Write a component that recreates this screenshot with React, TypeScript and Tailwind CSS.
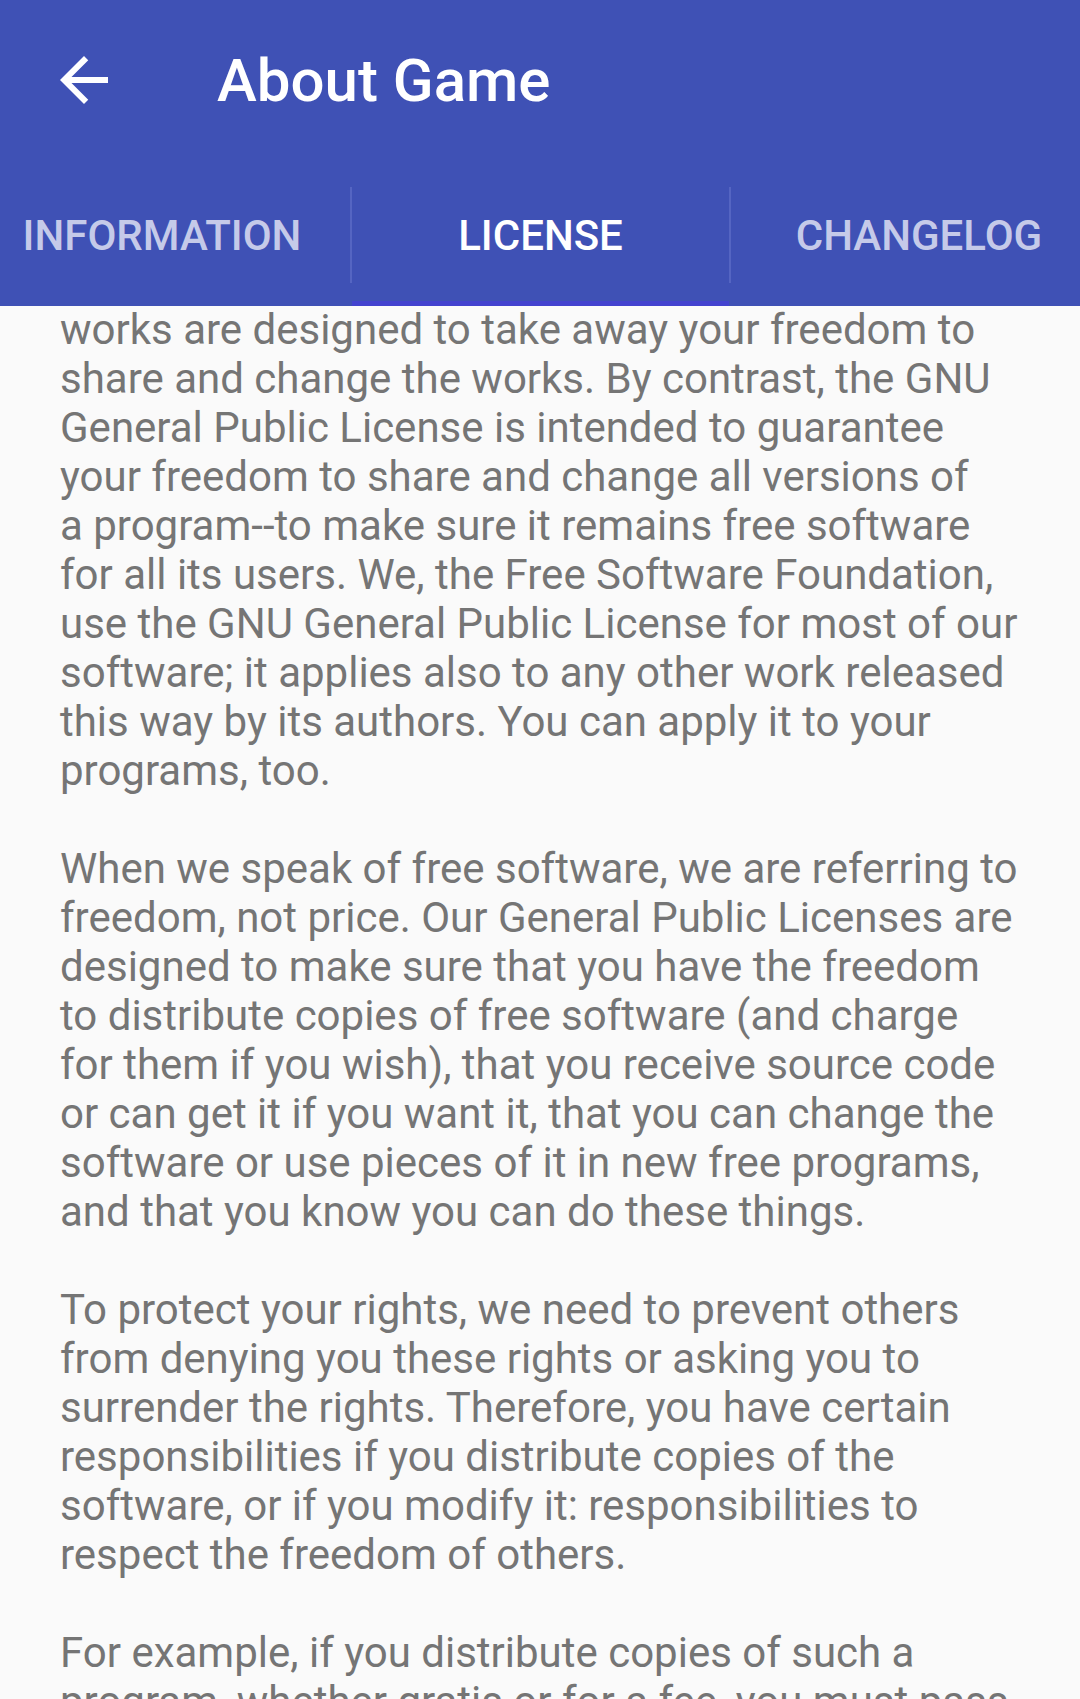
import React from "react";

const paragraphs: string[][] = [
  [
    "works are designed to take away your freedom to",
    "share and change the works. By contrast, the GNU",
    "General Public License is intended to guarantee",
    "your freedom to share and change all versions of",
    "a program--to make sure it remains free software",
    "for all its users. We, the Free Software Foundation,",
    "use the GNU General Public License for most of our",
    "software; it applies also to any other work released",
    "this way by its authors. You can apply it to your",
    "programs, too.",
  ],
  [
    "When we speak of free software, we are referring to",
    "freedom, not price. Our General Public Licenses are",
    "designed to make sure that you have the freedom",
    "to distribute copies of free software (and charge",
    "for them if you wish), that you receive source code",
    "or can get it if you want it, that you can change the",
    "software or use pieces of it in new free programs,",
    "and that you know you can do these things.",
  ],
  [
    "To protect your rights, we need to prevent others",
    "from denying you these rights or asking you to",
    "surrender the rights. Therefore, you have certain",
    "responsibilities if you distribute copies of the",
    "software, or if you modify it: responsibilities to",
    "respect the freedom of others.",
  ],
  [
    "For example, if you distribute copies of such a",
    "program, whether gratis or for a fee, you must pass",
  ],
];

export default function App() {
  return (
    <div
      className="w-[1080px] h-[1699px] overflow-hidden bg-[#fafafa] flex flex-col"
      style={{ fontFamily: "Roboto, 'Noto Sans', sans-serif" }}
    >
      <header className="bg-[#3f51b5] shrink-0 relative z-10">
        <div className="h-[160px] flex items-center">
          <div className="w-[72px] h-[72px] ml-[48px] flex items-center justify-center">
            <svg width="72" height="72" viewBox="0 0 24 24" fill="#ffffff">
              <path d="M20 11H7.83l5.59-5.59L12 4l-8 8 8 8 1.41-1.41L7.83 13H20v-2z" />
            </svg>
          </div>
          <h1 className="ml-[97px] mt-[2px] text-white text-[60px] font-medium leading-none">
            About Game
          </h1>
        </div>
        <div className="h-[146px] flex overflow-hidden">
          <div className="flex ml-[-26px]">
            <div className="w-[376px] flex items-center justify-center pt-[4px] text-[42px] font-medium text-[#c5cae9]">
              INFORMATION
            </div>
            <div className="w-[2px] h-[96px] mt-[27px] bg-[#5565c2]" />
            <div className="w-[377px] relative flex items-center justify-center pt-[4px] text-[42px] font-medium text-white">
              LICENSE
              <div className="absolute left-0 right-0 bottom-0 h-[5px] bg-[#4343cf]" />
            </div>
            <div className="w-[2px] h-[96px] mt-[27px] bg-[#5565c2]" />
            <div className="w-[376px] flex items-center justify-center pt-[4px] text-[42px] font-medium text-[#c5cae9]">
              CHANGELOG
            </div>
          </div>
        </div>
      </header>
      <main className="flex-1 overflow-hidden">
        <div className="pl-[60px] mt-[-1px] text-[42px] leading-[49px] text-[#757575]">
          {paragraphs.map((p, i) => (
            <div key={i} className={i > 0 ? "mt-[49px]" : ""}>
              {p.map((line, j) => (
                <div key={j} className="whitespace-nowrap">
                  {line}
                </div>
              ))}
            </div>
          ))}
        </div>
      </main>
    </div>
  );
}
